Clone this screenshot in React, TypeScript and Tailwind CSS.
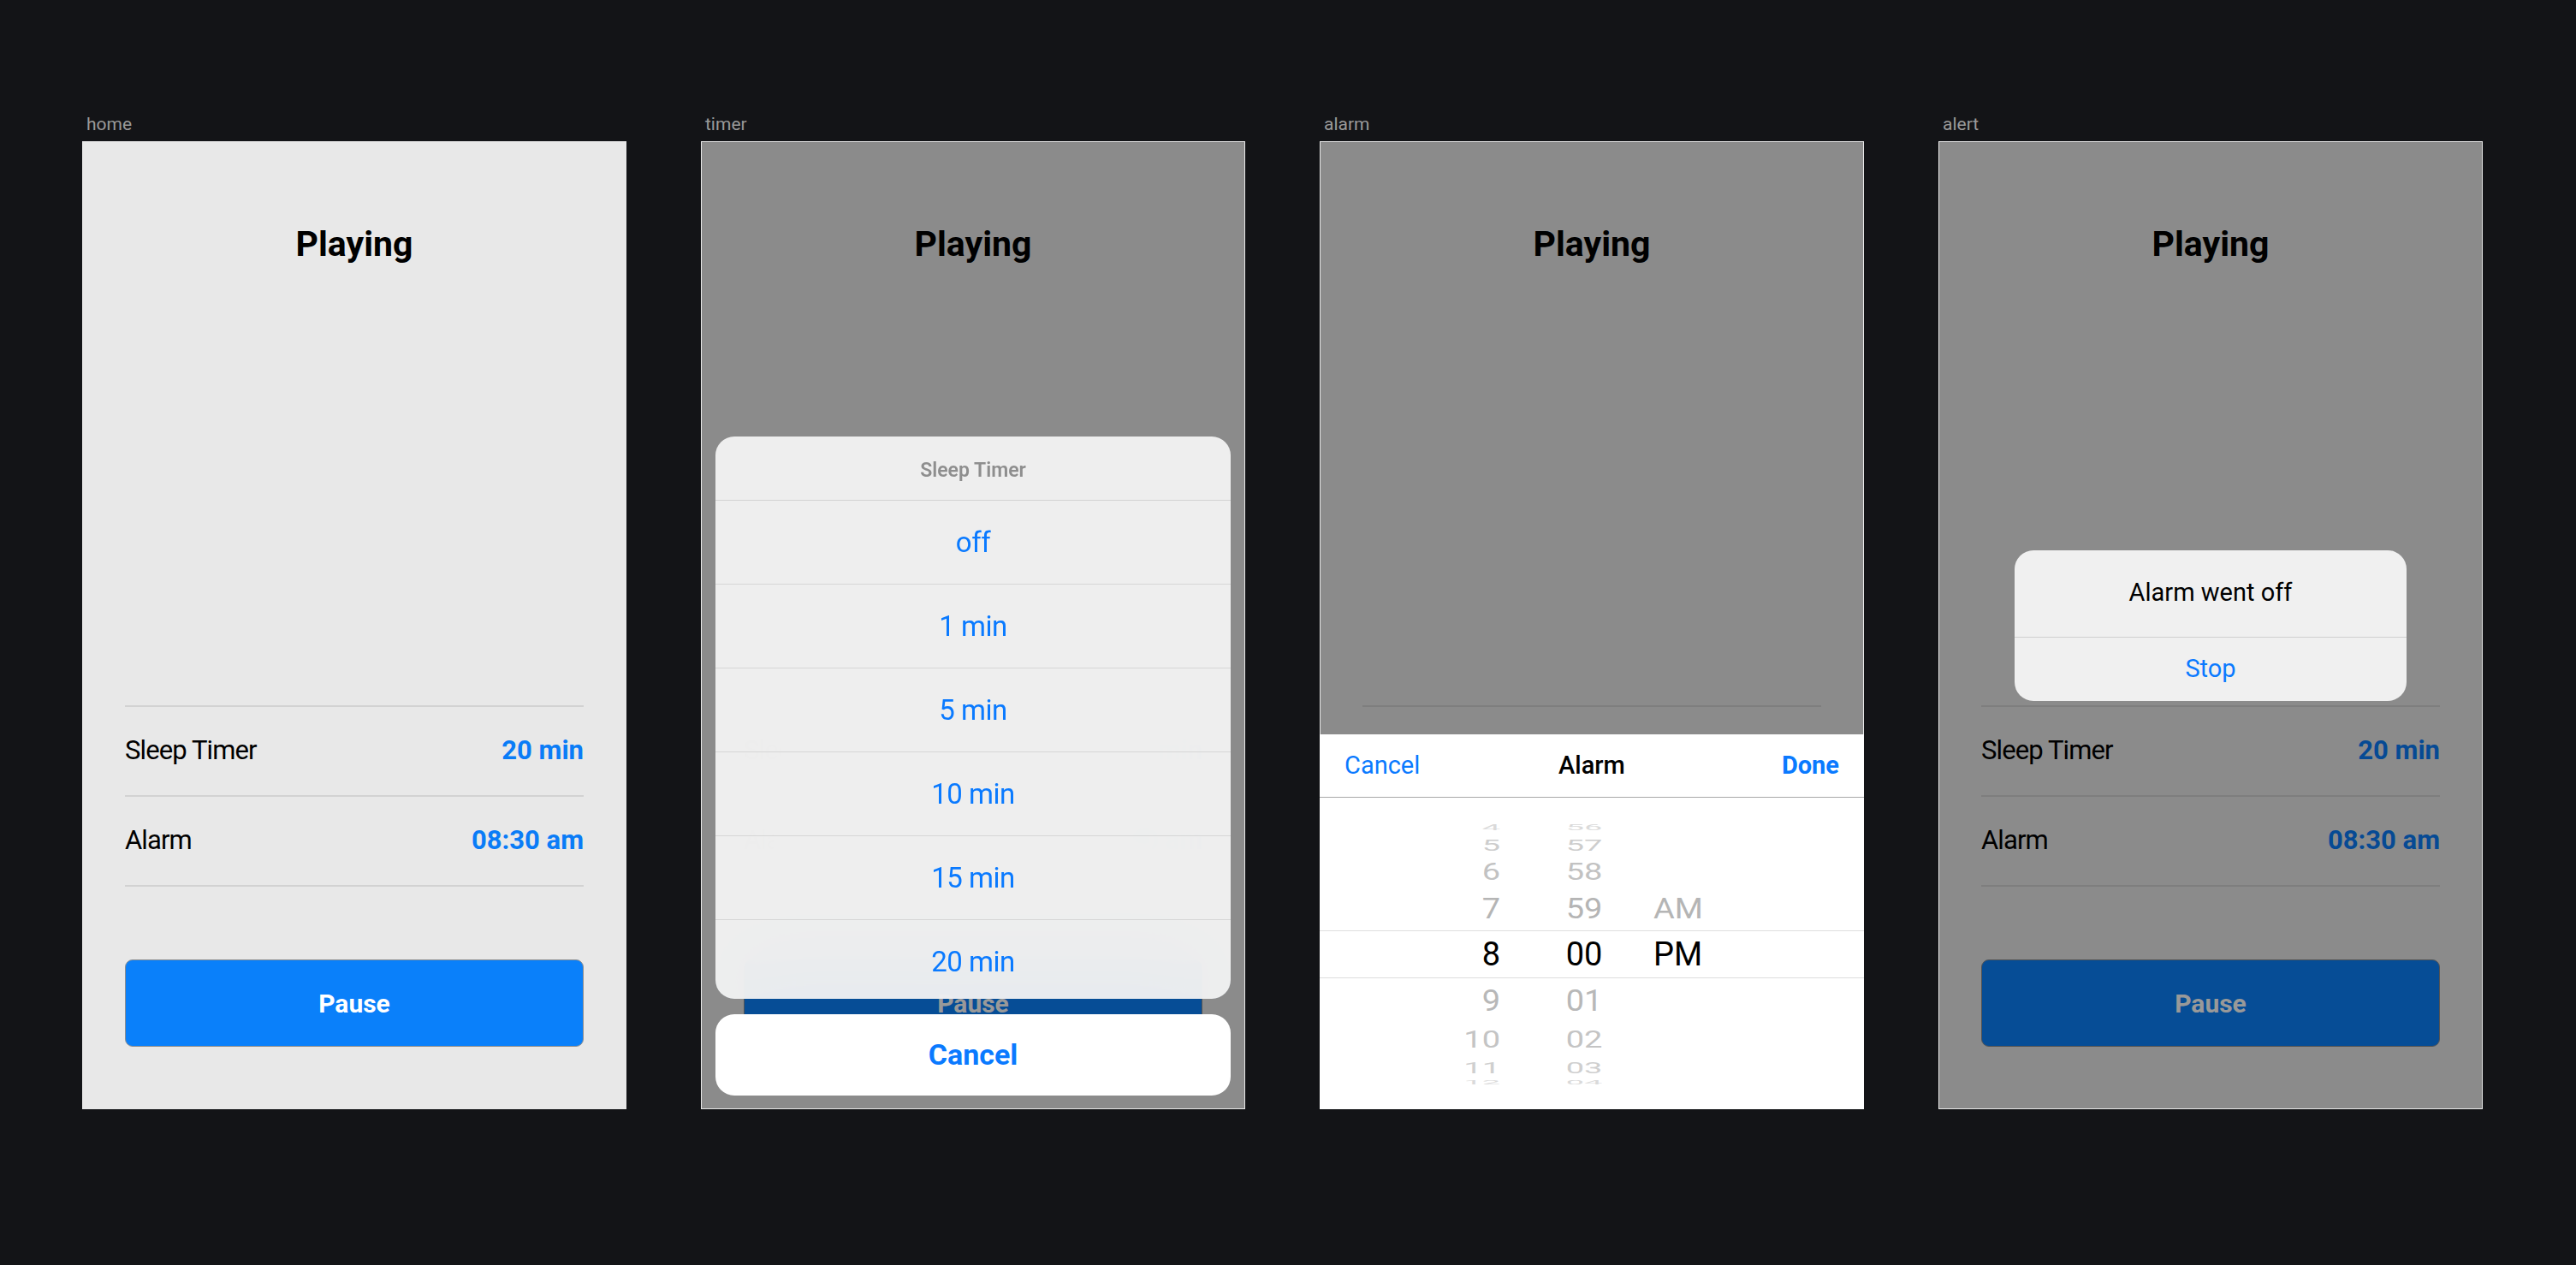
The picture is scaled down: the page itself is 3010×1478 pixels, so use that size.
import React from 'react';

const TIMER_OPTIONS = ['off', '1 min', '5 min', '10 min', '15 min', '20 min'];

const WHEEL = [
  { h: '4', m: '56', p: '', row: 'h-[14px]', text: 'scale-y-[0.22] text-[#dadada]' },
  { h: '5', m: '57', p: '', row: 'h-[26px]', text: 'scale-y-[0.5] text-[#cdcdcd]' },
  { h: '6', m: '58', p: '', row: 'h-[37px]', text: 'scale-y-[0.72] text-[#c2c2c2]' },
  { h: '7', m: '59', p: 'AM', row: 'h-[50px]', text: 'scale-y-[0.88] text-[#b5b5b5]' },
  { h: '8', m: '00', p: 'PM', row: 'h-[56px] border-y border-[#dedede]', text: 'text-black' },
  { h: '9', m: '01', p: '', row: 'h-[52px]', text: 'scale-y-[0.9] text-[#b8b8b8]' },
  { h: '10', m: '02', p: '', row: 'h-[40px]', text: 'scale-y-[0.72] text-[#c4c4c4]' },
  { h: '11', m: '03', p: '', row: 'h-[24px]', text: 'scale-y-[0.5] text-[#cfcfcf]' },
  { h: '12', m: '04', p: '', row: 'h-[10px]', text: 'scale-y-[0.2] text-[#dadada]' },
];

function SettingRow({ label, value }: { label: string; value: string }) {
  return (
    <div className="h-[105px] flex items-center justify-between border-b-2 border-[#d2d2d2]">
      <span className="text-[31px] tracking-[-0.9px] text-black">{label}</span>
      <span className="text-[31px] font-bold text-[#0a7cf7]">{value}</span>
    </div>
  );
}

// covered: the lower half sits under an opaque sheet, so it isn't drawn
function HomeScreen({ covered = false }: { covered?: boolean }) {
  return (
    <div className="flex flex-col px-[50px]">
      <h1 className="mt-[95px] h-[50px] leading-[50px] text-center text-[41px] font-bold text-black">Playing</h1>
      <div className="mt-[514px] border-t-2 border-[#d2d2d2]">
        <div className={covered ? 'invisible' : ''}>
          <SettingRow label="Sleep Timer" value="20 min" />
          <SettingRow label="Alarm" value="08:30 am" />
        </div>
      </div>
      <button
        className={`mt-[85px] h-[102px] rounded-[9px] border border-[#8d8d8d] bg-[#0a80fa] text-white text-[30px] font-bold ${covered ? 'invisible' : ''}`}
      >
        Pause
      </button>
    </div>
  );
}

function Frame({ label, covered, children }: { label: string; covered?: boolean; children?: React.ReactNode }) {
  return (
    <div className="flex flex-col w-[636px] shrink-0">
      <div className="h-[28px] leading-[28px] pl-[5px] mb-[6px] text-[21px] text-[#9a9a9a]">{label}</div>
      <div className="relative h-[1131px] bg-[#e8e8e8] overflow-hidden">
        <HomeScreen covered={covered} />
        {children}
      </div>
    </div>
  );
}

function Dim() {
  return <div className="absolute inset-px bg-black/40" />;
}

function TimerSheet() {
  return (
    <div className="absolute inset-x-[17px] bottom-[16px] flex flex-col gap-[18px]">
      <div className="h-[657px] rounded-[22px] overflow-hidden bg-[#f3f3f3]/95 backdrop-blur-2xl flex flex-col">
        <div className="h-[75px] shrink-0 pt-[6px] flex items-center justify-center border-b border-[#d2d2d2] text-[23px] font-semibold text-[#8e8e8e]">
          Sleep Timer
        </div>
        {TIMER_OPTIONS.map((o) => (
          <div
            key={o}
            className="h-[98px] shrink-0 flex items-center justify-center border-b border-[#d6d6d6] text-[33px] tracking-[-0.5px] text-[#0a7aff]"
          >
            {o}
          </div>
        ))}
      </div>
      <div className="h-[95px] rounded-[22px] bg-white flex items-center justify-center text-[34px] font-bold text-[#0a7aff]">
        Cancel
      </div>
    </div>
  );
}

function AlarmPicker() {
  return (
    <div className="absolute inset-x-0 bottom-0 h-[438px] bg-white flex flex-col">
      <div className="h-[74px] shrink-0 flex items-center px-[29px] border-b border-[#a9a9a9] text-[29px]">
        <div className="flex-1 flex justify-start">
          <span className="text-[#0a7aff]">Cancel</span>
        </div>
        <div className="flex-1 flex justify-center">
          <span className="font-medium text-black">Alarm</span>
        </div>
        <div className="flex-1 flex justify-end">
          <span className="font-bold text-[#0a7aff]">Done</span>
        </div>
      </div>
      <div className="flex-1 flex flex-col pt-[28px]">
        {WHEEL.map((r) => (
          <div key={r.h} className={`shrink-0 flex items-center ${r.row}`}>
            <div className={`flex items-center text-[38px] leading-none ${r.text}`}>
              <span className="w-[211px] text-right">{r.h}</span>
              <span className="ml-[48px] w-[100px] text-center">{r.m}</span>
              <span className="ml-[31px]">{r.p}</span>
            </div>
          </div>
        ))}
      </div>
    </div>
  );
}

function AlarmAlert() {
  return (
    <div className="absolute inset-0 flex items-center justify-center">
      <div className="w-[458px] rounded-[22px] bg-[#f0f0f0] flex flex-col">
        <div className="h-[102px] flex items-center justify-center border-b border-[#d0d0d0] text-[29px] text-black">
          Alarm went off
        </div>
        <div className="h-[74px] flex items-center justify-center text-[29px] text-[#0a7aff]">Stop</div>
      </div>
    </div>
  );
}

export default function App() {
  return (
    <div className="w-[3010px] h-[1478px] bg-[#131417] font-[family-name:Roboto,sans-serif] overflow-hidden">
      <div className="flex gap-[87px] pl-[96px] pt-[131px]">
        <Frame label="home" />
        <Frame label="timer">
          <Dim />
          <TimerSheet />
        </Frame>
        <Frame label="alarm" covered>
          <Dim />
          <AlarmPicker />
        </Frame>
        <Frame label="alert">
          <Dim />
          <AlarmAlert />
        </Frame>
      </div>
    </div>
  );
}
